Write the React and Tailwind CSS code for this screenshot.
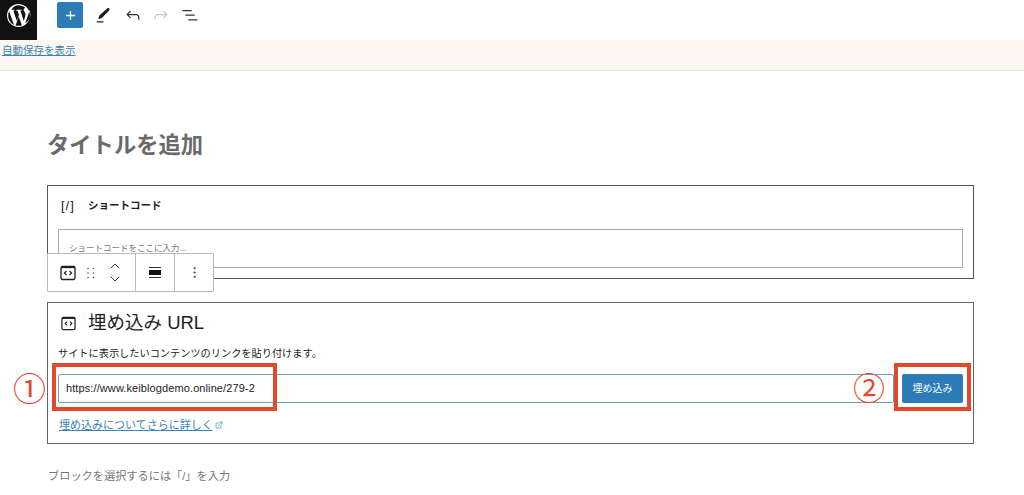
import { ChevronDown, ChevronUp, ExternalLink, MoreVertical } from 'lucide-react';

const fontStack = "font-['Liberation_Sans','Noto_Sans_CJK_JP',sans-serif]";

function WpLogo() {
  return (
    <svg viewBox="0 0 24 24" className="h-[25px] w-[25px]" fill="#fff">
      <path d="M12 1C5.9 1 1 5.9 1 12s4.9 11 11 11 11-4.9 11-11S18.1 1 12 1zm0 1.1c2.6 0 4.9 1 6.7 2.6h-.2c-1 0-1.6.8-1.6 1.7 0 .8.5 1.4 1 2.2.4.6.8 1.4.8 2.6 0 .8-.3 1.7-.7 3l-.9 3-3.3-9.8c.6 0 1.1-.1 1.1-.1.5 0 .4-.8-.1-.8 0 0-1.5.1-2.4.1s-2.4-.1-2.4-.1c-.5 0-.6.8 0 .8 0 0 .5.1 1 .1l1.4 3.9-2 6-3.3-9.9c.6 0 1.1-.1 1.1-.1.5 0 .4-.8-.1-.8 0 0-1.5.1-2.4.1h-.6C6.9 3.4 9.3 2.1 12 2.1zM2.1 12c0-1.4.3-2.8.9-4l4.7 13C4.3 19.4 2.1 16 2.1 12zm9.9 9.9c-1 0-1.9-.1-2.8-.4l3-8.6 3 8.4v.1c-1 .3-2.1.5-3.2.5zm1.4-.2zm5.1-2.2 3-8.7c.6-1.4.7-2.5.7-3.5v-1c.8 1.4 1.2 3 1.2 4.7 0 3.6-2 6.8-4.9 8.5z" />
    </svg>
  );
}

function EmbedIcon({ className }) {
  return (
    <svg viewBox="0 0 16 16" className={className} fill="none" stroke="#1e1e1e">
      <rect x="1" y="1.5" width="14" height="13" rx="1.5" strokeWidth="1.3" />
      <path d="M1 2.5h14" strokeWidth="1.3" />
      <path d="M6.5 6 4.5 8l2 2M9.5 6l2 2-2 2" strokeWidth="1.2" />
    </svg>
  );
}

function ToolIcon({ d, color }) {
  return (
    <svg viewBox="0 0 24 24" className="h-5 w-5" fill={color}>
      <path d={d} />
    </svg>
  );
}

function TopBar() {
  return (
    <header className="flex h-10 items-start bg-white">
      <div className="flex h-10 w-[37px] items-start justify-center bg-[#111] pt-[3px]">
        <WpLogo />
      </div>
      <button className="ml-5 mt-[2px] flex h-[26px] w-[26px] items-center justify-center rounded-[2px] bg-[#2d7cb8]">
        <svg viewBox="0 0 12 12" className="h-[11px] w-[11px]" stroke="#fff" strokeWidth="1.4">
          <path d="M6 1v10M1 6h10" />
        </svg>
      </button>
      <div className="ml-[10px] mt-[5px] flex items-center">
        <ToolIcon color="#1e1e1e" d="M4.5 21h8v-1.5h-8zM17 4.2c.8-.7 1.8-.6 2.4 0 .6.7.6 1.6-.1 2.3l-7.8 8.3c-.9 1-2.6 1.7-5 2 .4-2.3 1-4 2-5z" />
        <div className="ml-[10px]">
          <ToolIcon color="#333" d="M18.3 11.7c-.6-.6-1.4-.9-2.3-.9H6.7l2.9-3.3-1.1-1-4.5 5L8.5 16l1-1-2.7-2.7H16c.5 0 .9.2 1.3.5 1 1 1 3.4 1 4.5v.3h1.5v-.2c0-1.5 0-4.3-1.5-5.7z" />
        </div>
        <div className="ml-2">
          <ToolIcon color="#c8c8c8" d="M15.6 6.5l-1.1 1 2.9 3.3H8c-.9 0-1.7.3-2.3.9-1.4 1.5-1.4 4.2-1.4 5.6v.2h1.5v-.3c0-1.1 0-3.5 1-4.5.3-.3.7-.5 1.3-.5h9.2L14.5 15l1.1 1.1 4.6-4.6-4.6-5z" />
        </div>
        <div className="ml-[9px]">
          <ToolIcon color="#333" d="M3 6h11v1.5H3V6zm3.5 5.5h11V13h-11v-1.5zM21 17H10v1.5h11V17z" />
        </div>
      </div>
    </header>
  );
}

function BlockToolbar() {
  return (
    <div className="absolute left-[-1px] top-[67px] flex h-[39px] w-[167px] items-center rounded-[1px] border border-[#b9b9b9] bg-white">
      <div className="flex h-full w-[88px] items-center border-r border-[#b9b9b9] pl-[12px]">
        <EmbedIcon className="h-4 w-4" />
        <svg viewBox="0 0 8 12" className="ml-[11px] h-[12px] w-2" fill="#555">
          <circle cx="1" cy="1.5" r="0.8" />
          <circle cx="6.5" cy="1.5" r="0.8" />
          <circle cx="1" cy="6" r="0.8" />
          <circle cx="6.5" cy="6" r="0.8" />
          <circle cx="1" cy="10.5" r="0.8" />
          <circle cx="6.5" cy="10.5" r="0.8" />
        </svg>
        <div className="ml-3 flex flex-col">
          <ChevronUp className="h-4 w-4 text-[#333]" strokeWidth={1.5} />
          <ChevronDown className="-mt-[3px] h-4 w-4 text-[#333]" strokeWidth={1.5} />
        </div>
      </div>
      <div className="flex h-full w-[39px] items-center justify-center border-r border-[#b9b9b9]">
        <div className="flex w-[12px] flex-col">
          <div className="h-px bg-[#333]" />
          <div className="mt-[2px] h-[5px] bg-[#111]" />
          <div className="mt-[2px] h-px bg-[#333]" />
        </div>
      </div>
      <div className="flex flex-1 items-center justify-center">
        <MoreVertical className="h-[15px] w-[15px] text-[#444]" strokeWidth={1.5} />
      </div>
    </div>
  );
}

function ShortcodeBlock() {
  return (
    <section className="relative h-[94px] border border-[#555] bg-white px-[10px]">
      <div className="flex h-[40px] items-center pl-[3px]">
        <span className="w-[27px] text-[13px] tracking-[1px] text-[#222]">[/]</span>
        <span className="text-[10.5px] font-bold text-[#1e1e1e]">ショートコード</span>
      </div>
      <div className="mt-[3px] flex h-[39px] w-[905px] items-center border border-[#aaa] pl-[10px] text-[8.5px] text-[#777]">
        ショートコードをここに入力...
      </div>
      <BlockToolbar />
    </section>
  );
}

function EmbedBlock() {
  return (
    <section className="relative mt-[23px] h-[142px] border border-[#666] bg-white px-[10px]">
      <div className="flex h-[40px] items-center pl-[3px]">
        <EmbedIcon className="h-[15px] w-[15px]" />
        <span className="ml-[12px] text-[18.5px] text-[#1e1e1e]">埋め込み URL</span>
      </div>
      <p className="mt-[2px] text-[10.2px] leading-[18px] text-[#222]">
        サイトに表示したいコンテンツのリンクを貼り付けます。
      </p>
      <div className="mt-[11px] flex items-center">
        <div className="flex h-[29px] flex-1 items-center rounded-[2px] border border-[#6d9fbd] pl-[7px] text-[11px] tracking-[0.1px] text-[#222]">
          https://www.keiblogdemo.online/279-2
        </div>
        <button className="ml-[8px] flex h-[29px] w-[61px] items-center justify-center rounded-[2px] bg-[#2d7cb8] text-[10px] text-white">
          埋め込み
        </button>
      </div>
      <div className="mt-[14px] flex items-center pl-px">
        <a className="text-[11px] text-[#3a85b5] underline">埋め込みについてさらに詳しく</a>
        <ExternalLink className="ml-[2px] h-2 w-2 text-[#3a85b5]" />
      </div>
      {/* red annotation frames and numbers */}
      <div className="absolute left-[4px] top-[60px] h-[48px] w-[225px] border-[4px] border-[#e2492c]" />
      <div className="absolute left-[846px] top-[60px] h-[48px] w-[77px] border-[4px] border-[#e2492c]" />
      <span className="absolute left-[-35px] top-[65px] font-['Noto_Sans_CJK_JP',sans-serif] text-[33px] leading-[38px] text-[#e2492c]">①</span>
      <span className="absolute left-[805px] top-[64px] font-['Noto_Sans_CJK_JP',sans-serif] text-[32px] leading-[38px] text-[#e2492c]">②</span>
    </section>
  );
}

export default function App() {
  return (
    <div className={`h-[495px] w-[1024px] overflow-hidden bg-white ${fontStack}`}>
      <TopBar />
      <div className="h-[31px] border-b border-[#e8e8e8] bg-[#fcf7f1] pl-[2px] pt-[3px]">
        <a className="block text-[10.5px] leading-[14px] text-[#3a85b5] underline">自動保存を表示</a>
      </div>
      <main className="ml-[47px] w-[927px]">
        <h1 className="mt-[58px] h-[56px] text-[22.3px] font-bold leading-[34px] text-[#6a6a6a]">タイトルを追加</h1>
        <ShortcodeBlock />
        <EmbedBlock />
        <p className="mt-[24px] pl-px text-[11.2px] leading-4 text-[#777]">ブロックを選択するには「/」を入力</p>
      </main>
    </div>
  );
}
